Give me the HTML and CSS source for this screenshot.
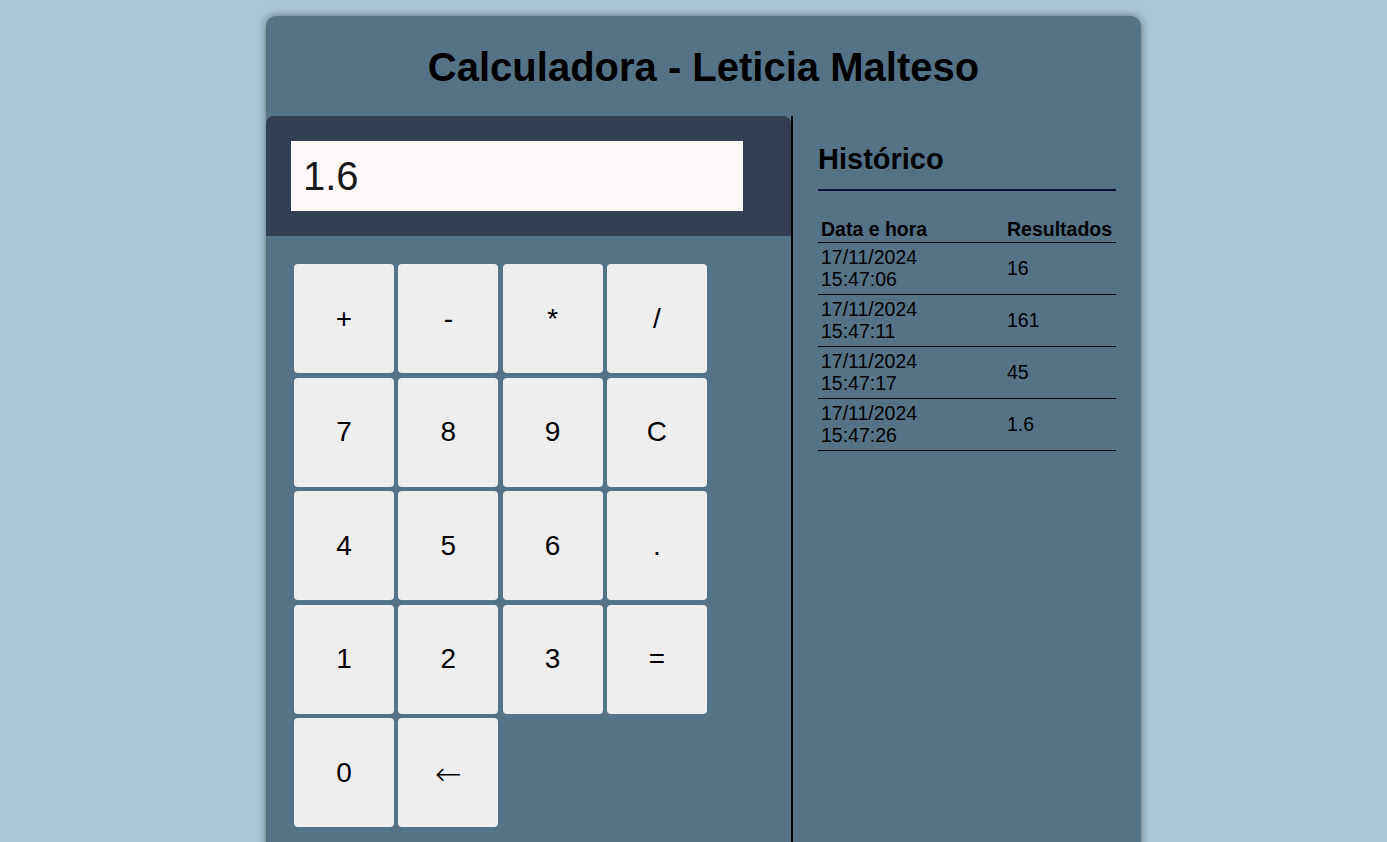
FILE: index.html
```html
<!DOCTYPE html>
<html lang="pt-BR">
<head>
<meta charset="utf-8">
<title>Calculadora - Leticia Malteso</title>
<link rel="stylesheet" href="styles.css">
</head>
<body>
<div class="calc">
  <h1 class="title">Calculadora - Leticia Malteso</h1>
  <div class="main">
    <div class="left">
      <div class="display-area">
        <div class="display">1.6</div>
      </div>
      <div class="keys">
        <button class="key">+</button>
        <button class="key">-</button>
        <button class="key">*</button>
        <button class="key">/</button>
        <button class="key">7</button>
        <button class="key">8</button>
        <button class="key">9</button>
        <button class="key">C</button>
        <button class="key">4</button>
        <button class="key">5</button>
        <button class="key">6</button>
        <button class="key">.</button>
        <button class="key">1</button>
        <button class="key">2</button>
        <button class="key">3</button>
        <button class="key">=</button>
        <button class="key">0</button>
        <button class="key key-arrow">&larr;</button>
      </div>
    </div>
    <div class="right">
      <h2 class="hist-title">Histórico</h2>
      <table class="hist">
        <thead>
          <tr><th>Data e hora</th><th>Resultados</th></tr>
        </thead>
        <tbody>
          <tr><td>17/11/2024<br>15:47:06</td><td>16</td></tr>
          <tr><td>17/11/2024<br>15:47:11</td><td>161</td></tr>
          <tr><td>17/11/2024<br>15:47:17</td><td>45</td></tr>
          <tr><td>17/11/2024<br>15:47:26</td><td>1.6</td></tr>
        </tbody>
      </table>
    </div>
  </div>
</div>
</body>
</html>
```

FILE: styles.css
```css
html, body {
  margin: 0;
  padding: 0;
}
body {
  background: #a9c8d6;
  font-family: "Liberation Sans", Arial, sans-serif;
  color: #000;
  padding: 16px 0 0 20px;
  height: 826px;
  overflow: hidden;
}
.calc {
  width: 875px;
  margin: 0 auto;
  background: #557387;
  border-radius: 10px;
  box-shadow: 0 0 10px rgba(0, 0, 0, 0.45);
  min-height: 900px;
}
.title {
  margin: 0;
  height: 100px;
  display: flex;
  align-items: center;
  justify-content: center;
  font-size: 40px;
  font-weight: bold;
  padding-top: 2px;
  box-sizing: border-box;
}
.main {
  display: flex;
}
.left {
  width: 525px;
  border-right: 2px solid #000;
  min-height: 800px;
}
.display-area {
  background: #333e52;
  height: 120px;
  border-radius: 8px 8px 0 0;
  padding: 25px;
  box-sizing: border-box;
}
.display {
  width: 452px;
  height: 70px;
  background: #fcf8f7;
  color: #1a1a1a;
  font-size: 40px;
  line-height: 70px;
  padding-left: 12px;
  box-sizing: border-box;
}
.keys {
  display: grid;
  grid-template-columns: repeat(4, 100px);
  grid-auto-rows: 109px;
  column-gap: 4.3px;
  row-gap: 4.5px;
  padding: 28px 0 0 28px;
}
.key {
  border: none;
  background: #eeeeee;
  border-radius: 4px;
  font-family: "Liberation Sans", Arial, sans-serif;
  font-size: 28px;
  color: #000;
  padding: 0;
}
.key-arrow {
  font-family: "DejaVu Sans", sans-serif;
  font-size: 32px;
  font-weight: 300;
  padding-top: 2px;
}
.right {
  flex: 1;
  padding: 0 25px 0 25px;
}
.hist-title {
  margin: 0;
  padding-top: 26px;
  font-size: 29px;
  font-weight: bold;
  line-height: 34px;
  padding-bottom: 13px;
  border-bottom: 2px solid #0b0f3a;
}
.hist {
  width: 100%;
  border-collapse: collapse;
  margin-top: 27px;
  font-size: 19.5px;
}
.hist th {
  text-align: left;
  font-weight: bold;
  padding: 0 3px 2px 3px;
  border-bottom: 1px solid #000;
  line-height: 22px;
}
.hist td {
  padding: 3px 3px 4px 3px;
  border-bottom: 1px solid #000;
  line-height: 22px;
  vertical-align: middle;
}
.hist th:last-child,
.hist td:last-child {
  padding-left: 1px;
  padding-right: 2px;
  width: 107px;
}
```
